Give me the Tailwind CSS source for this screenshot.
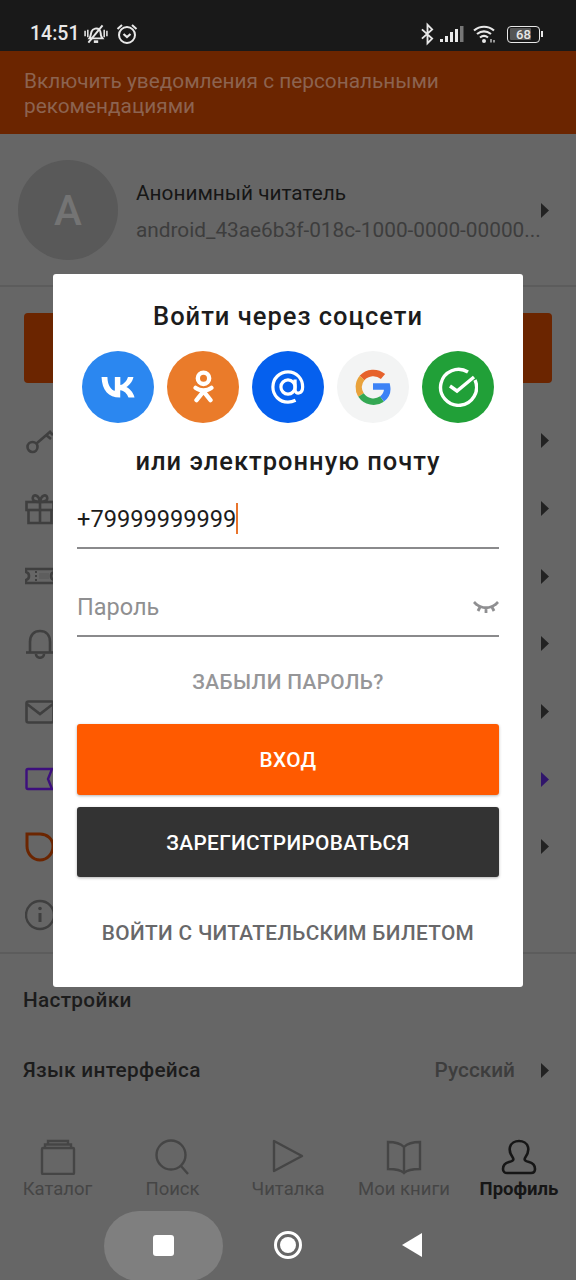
<!DOCTYPE html>
<html lang="ru">
<head>
<meta charset="UTF-8">
<title>Профиль</title>
<script src="https://cdn.jsdelivr.net/npm/@tailwindcss/browser@4"></script>
</head>
<body class="bg-[#666666]">
<div class="relative w-[576px] h-[1280px] overflow-hidden bg-[#666666] font-['Roboto',sans-serif] flex flex-col">

  <!-- status bar -->
  <div class="h-[51px] shrink-0 bg-[#191919] flex items-end justify-between pl-[30px] pr-[33px] pb-[4px] text-[#e8e8e8]">
    <div class="flex items-center gap-[5px] h-[26px]">
      <span class="text-[19.500px] leading-none font-medium">14:51</span>
      <svg width="24" height="24" viewBox="0 0 22 22" fill="none" stroke="#e8e8e8" stroke-width="1.800"><path d="M5 15c1.500-2 1-4 2-6.500 1-2.500 5-3.500 7-1.500 1.500 1.500 1.200 3 1.500 5 .2 1 .8 2 1.500 3z"/><path d="M9 18h4" stroke-width="2.400"/><path d="M4 19 17 3"/><path d="M1 8v5M3.500 7v7M18.500 7v7M21 8v5" stroke-width="1.400"/></svg>
      <svg width="22" height="24" viewBox="0 0 22 24" fill="none" stroke="#e8e8e8" stroke-width="2" class="ml-[3px]"><circle cx="11" cy="13" r="8"/><path d="M1.500 7 6 3M20.500 7 16 3"/><path d="m7.500 12 3.500 3 3.500-3" stroke-width="2.200"/></svg>
    </div>
    <div class="flex items-center h-[26px]">
      <svg width="13" height="24" viewBox="0 0 14 24" fill="none" stroke="#e8e8e8" stroke-width="2" class="mr-[5px]"><path d="M1 7l11 10-5 5V2l5 5L1 17"/></svg>
      <svg width="26" height="18" viewBox="0 0 24 18" fill="#e8e8e8" class="mr-[8px]"><rect x="0" y="14" width="3" height="3"/><rect x="5" y="11" width="3" height="6"/><rect x="10" y="7" width="3" height="10"/><rect x="15" y="4" width="3" height="13"/><rect x="20" y="1" width="3.500" height="16" fill="#777"/></svg>
      <svg width="24" height="20" viewBox="0 0 24 20" fill="none" stroke="#e8e8e8" stroke-width="2.200" class="mr-[10px]"><path d="M1 6.500c6-5 14-5 20 0M4 10c4.500-3.500 9.500-3.500 14 0M7 13.500c2.500-2 5.500-2 8 0"/><circle cx="11" cy="17" r="2" fill="#e8e8e8" stroke="none"/><path d="M18 15v3.500M21 16v2.500" stroke-width="1.200"/></svg>
      <div class="relative w-[33px] h-[17px] border border-[#e8e8e8] rounded-[4px] flex items-center p-[1.500px]">
        <div class="h-full w-[21px] bg-[#555] rounded-[1px]"></div>
        <span class="absolute inset-0 text-center text-[13px] leading-[15px] font-medium text-[#e8e8e8]">68</span>
      </div>
      <div class="w-[2px] h-[6px] bg-[#e8e8e8] ml-[1px]"></div>
    </div>
  </div>

  <!-- notifications banner -->
  <div class="h-[83px] shrink-0 bg-[#6b2500] px-[24px] pt-[18px] text-[20.800px] leading-[24.500px] text-[#8c6350]">
    Включить уведомления с персональными<br>рекомендациями
  </div>

  <!-- profile header -->
  <div class="h-[153px] shrink-0 border-b-2 border-[#5c5c5c] pl-[18px] pr-[28px] pt-[26px] flex items-start">
    <div class="w-[100px] h-[100px] rounded-full bg-[#595959] flex items-center justify-center text-[42px] font-medium text-[#747474] shrink-0">A</div>
    <div class="ml-[18px] w-[404px] pt-[21px]">
      <div class="text-[20.800px] leading-[24px] text-[#161616]">Анонимный читатель</div>
      <div class="mt-[13px] text-[20.800px] leading-[24px] text-[#3d3d3d] whitespace-nowrap">android_43ae6b3f-018c-1000-0000-00000...</div>
    </div>
    <svg width="9" height="15" viewBox="0 0 9 15" class="mt-[43px] shrink-0"><path d="M1 0l8 7.500-8 7.500z" fill="#222"/></svg>
  </div>

  <!-- background button -->
  <div class="h-[96px] shrink-0 px-[24px] pt-[26px]">
    <div class="h-[70px] bg-[#6b2500] rounded-[4px]"></div>
  </div>

  <!-- menu rows -->
  <div class="shrink-0 pl-[25px] pr-[27px] mt-[24px] flex flex-col">
    <div class="h-[67.700px] flex items-center justify-between">
      <svg width="30" height="30" viewBox="0 0 30 30" fill="none" stroke="#3f3f3f" stroke-width="2.600"><circle cx="7.500" cy="21" r="5"/><path d="M11.500 17.500 26 5M21 9l5 4M25 6l3 3"/></svg>
      <svg width="9" height="15" viewBox="0 0 9 15"><path d="M1 0l8 7.500-8 7.500z" fill="#222"/></svg>
    </div>
    <div class="h-[67.700px] flex items-center justify-between">
      <svg width="30" height="32" viewBox="0 0 30 32" fill="none" stroke="#3f3f3f" stroke-width="2.600"><rect x="1.500" y="9" width="27" height="8"/><path d="M3.500 17v13h23V17M15 9v21M15 9c-6 0-8-2-7-5s6-2 7 5c1-7 6-8 7-5s-1 5-7 5z"/></svg>
      <svg width="9" height="15" viewBox="0 0 9 15"><path d="M1 0l8 7.500-8 7.500z" fill="#222"/></svg>
    </div>
    <div class="h-[67.700px] flex items-center justify-between">
      <svg width="30" height="18" viewBox="0 0 30 18" fill="none" stroke="#3f3f3f" stroke-width="2.600"><path d="M1 2h28v3c-4 1-4 7 0 8v3H1v-3c4-1 4-7 0-8z"/><path d="M11 4v2M11 8v2M11 12v2" stroke-width="2"/><path d="M14 6h10v6H14z" fill="#5e5e5e" stroke="none"/></svg>
      <svg width="9" height="15" viewBox="0 0 9 15"><path d="M1 0l8 7.500-8 7.500z" fill="#222"/></svg>
    </div>
    <div class="h-[67.700px] flex items-center justify-between">
      <svg width="30" height="30" viewBox="0 0 30 30" fill="none" stroke="#3f3f3f" stroke-width="2.600"><path d="M5 23V13C5 6 9 2 15 2s10 4 10 11v10"/><path d="M1 23.500h28"/><path d="M11 25c0 5 8 5 8 0"/></svg>
      <svg width="9" height="15" viewBox="0 0 9 15"><path d="M1 0l8 7.500-8 7.500z" fill="#222"/></svg>
    </div>
    <div class="h-[67.700px] flex items-center justify-between">
      <svg width="30" height="24" viewBox="0 0 30 24" fill="none" stroke="#3f3f3f" stroke-width="2.600"><rect x="1.500" y="1.500" width="27" height="21" rx="2"/><path d="m2 4 13 10L28 4"/></svg>
      <svg width="9" height="15" viewBox="0 0 9 15"><path d="M1 0l8 7.500-8 7.500z" fill="#222"/></svg>
    </div>
    <div class="h-[67.700px] flex items-center justify-between">
      <svg width="30" height="24" viewBox="0 0 30 24" fill="none" stroke="#3d0f7d" stroke-width="2.400"><path d="M3 2h24l-4 10 4 10H3a1.500 1.500 0 0 1-1.500-1.500v-17A1.500 1.500 0 0 1 3 2z"/></svg>
      <svg width="9" height="15" viewBox="0 0 9 15"><path d="M1 0l8 7.500-8 7.500z" fill="#30156b"/></svg>
    </div>
    <div class="h-[67.700px] flex items-center justify-between">
      <svg width="30" height="30" viewBox="0 0 30 30" fill="none" stroke="#6b2500" stroke-width="3"><path d="M2 2h13c7 0 13 5 13 12 0 8-6 14-13 14S2 22 2 14z"/></svg>
      <svg width="9" height="15" viewBox="0 0 9 15"><path d="M1 0l8 7.500-8 7.500z" fill="#222"/></svg>
    </div>
    <div class="h-[67.700px] flex items-center justify-between">
      <svg width="32" height="32" viewBox="0 0 32 32" fill="none" stroke="#3f3f3f" stroke-width="2.400"><circle cx="15" cy="16" r="14"/><path d="M15 14v9" stroke-width="3"/><circle cx="15" cy="9.500" r="1.800" fill="#3f3f3f" stroke="none"/></svg>
    </div>
  </div>

  <!-- settings -->
  <div class="shrink-0 mt-[3px] h-[2px] bg-[#5c5c5c]"></div>
  <div class="shrink-0 pl-[23px] pt-[34px] text-[20.800px] leading-[24px] tracking-[0.3px] font-medium text-[#1c1c1c]">Настройки</div>
  <div class="shrink-0 pl-[23px] pr-[27px] mt-[47px] h-[24px] flex items-center justify-between text-[20.800px] tracking-[0.3px] font-medium text-[#1c1c1c]">
    <span>Язык интерфейса</span>
    <span class="flex items-center gap-[25px] text-[#3d3d3d] tracking-normal">Русский
      <svg width="9" height="15" viewBox="0 0 9 15"><path d="M1 0l8 7.500-8 7.500z" fill="#222"/></svg>
    </span>
  </div>

  <!-- tab bar -->
  <div class="shrink-0 mt-[56px] grid grid-cols-[115px_115px_116px_116px_114px] h-[72px]">
    <div class="flex flex-col items-center text-[#454545]">
      <svg width="36" height="36" viewBox="0 0 36 36" fill="none" stroke="#454545" stroke-width="2.400"><rect x="2" y="9" width="32" height="26" rx="1"/><path d="M5 9V5.500h26V9M8 5V2h20v3"/></svg>
      <span class="mt-[3px] text-[18.500px] leading-[22px] whitespace-nowrap">Каталог</span>
    </div>
    <div class="flex flex-col items-center text-[#454545]">
      <svg width="36" height="36" viewBox="0 0 36 36" fill="none" stroke="#454545" stroke-width="2.400"><circle cx="16" cy="16" r="14.500"/><path d="m26 27 7 8"/></svg>
      <span class="mt-[3px] text-[18.500px] leading-[22px] whitespace-nowrap">Поиск</span>
    </div>
    <div class="flex flex-col items-center text-[#454545]">
      <svg width="36" height="36" viewBox="0 0 36 36" fill="none" stroke="#454545" stroke-width="2.400" stroke-linejoin="round"><path d="M4 2v30l28-15z"/></svg>
      <span class="mt-[3px] text-[18.500px] leading-[22px] whitespace-nowrap">Читалка</span>
    </div>
    <div class="flex flex-col items-center text-[#454545]">
      <svg width="36" height="36" viewBox="0 0 36 36" fill="none" stroke="#454545" stroke-width="2.400"><path d="M18 8c-3-3-8-5-16-5v27c8 0 13 1 16 4 3-3 8-4 16-4V3C26 3 21 5 18 8zM18 8v26"/></svg>
      <span class="mt-[3px] text-[18.500px] leading-[22px] whitespace-nowrap">Мои книги</span>
    </div>
    <div class="flex flex-col items-center text-[#161616]">
      <svg width="36" height="36" viewBox="0 0 36 36" fill="none" stroke="#161616" stroke-width="2.600"><path d="M12 19c-3-4-4-7-3-11 1-4 5-6 9-6s8 2 9 6c1 4 0 7-3 11-1 2 0 3 4 4 4 1 6 3 6 7 0 3-2 4-4 4H6c-2 0-4-1-4-4 0-4 2-6 6-7 4-1 5-2 4-4z"/></svg>
      <span class="mt-[3px] text-[18.500px] leading-[22px] font-bold whitespace-nowrap">Профиль</span>
    </div>
  </div>

  <!-- android nav -->
  <div class="shrink-0 flex-1 flex items-start pl-[104px]">
    <div class="w-[119px] h-[70px] rounded-full bg-[#7f7f7f] flex items-center justify-center">
      <div class="w-[21px] h-[21px] bg-white rounded-[3px]"></div>
    </div>
    <div class="w-[28px] h-[28px] ml-[51px] mt-[20px] rounded-full border-[3px] border-white flex items-center justify-center">
      <div class="w-[16px] h-[16px] rounded-full bg-white"></div>
    </div>
    <svg width="21" height="24" viewBox="0 0 21 24" class="ml-[99px] mt-[22px]"><path d="M21 0v24L1 12z" fill="#fff"/></svg>
  </div>

  <!-- login modal -->
  <div class="absolute left-[53px] top-[274px] w-[470px] h-[713px] bg-white rounded-[3px] px-[24px] pt-[27px] flex flex-col">
    <h2 class="text-center text-[25.500px] leading-[30px] font-medium tracking-[1px] text-[#1c1c1c]">Войти через соцсети</h2>
    <div class="mt-[20px] flex justify-between px-[5px]">
      <div class="w-[72px] h-[72px] rounded-full bg-[#2b87f0] flex items-center justify-center">
        <svg width="35" height="22" viewBox="0 0 38 24"><path d="M20.500 23.500C8 23.500 1 15 .5 1h6.400c.2 10 4.600 14.300 8.100 15.200V1h6v8.700C24.500 9.300 28 5.400 29.300 1h6c-1 5.300-5 9.300-7.800 11 2.800 1.300 7.300 4.800 9 11.500h-6.600c-1.400-4.300-4.800-7.600-9-8v8z" fill="#fff"/></svg>
      </div>
      <div class="w-[72px] h-[72px] rounded-full bg-[#ea7b2a] flex items-center justify-center">
        <svg width="21" height="34" viewBox="0 0 24 38" fill="none" stroke="#fff" stroke-width="5" stroke-linecap="round"><circle cx="12" cy="9" r="6.500"/><path d="M3 20c5 4 13 4 18 0M12 24 4 34M12 24l8 10"/></svg>
      </div>
      <div class="w-[72px] h-[72px] rounded-full bg-[#0560ee] flex items-center justify-center">
        <svg width="34" height="34" viewBox="0 0 36 36" fill="none" stroke="#fff" stroke-width="3.400"><circle cx="18" cy="18" r="7.500"/><path d="M25.500 10v11c0 5 8 5 8-3C33.500 9 27 2 18 2S2 9 2 18s7 16 16 16c3 0 6-1 8-2"/></svg>
      </div>
      <div class="w-[72px] h-[72px] rounded-full bg-[#f3f4f4] flex items-center justify-center">
        <svg width="36" height="36" viewBox="0 0 36 36" fill="none" stroke-width="6.500"><path d="M28 7.500A15 15 0 0 0 7 9" stroke="#e6622d"/><path d="M7 9a15 15 0 0 0-1 17" stroke="#e9a23b"/><path d="M6 26a15 15 0 0 0 21 4" stroke="#34a853"/><path d="M27 30c4-3 6-7 5-12.500H18" stroke="#3c82f6"/></svg>
      </div>
      <div class="w-[72px] h-[72px] rounded-full bg-[#21a038] flex items-center justify-center">
        <svg width="40" height="40" viewBox="0 0 40 40" fill="none" stroke="#fff" stroke-width="3.400"><path d="M37 13a18 18 0 1 1-7-8"/><path d="m12 19 7 5L36 10"/></svg>
      </div>
    </div>
    <div class="mt-[23px] text-center text-[25.500px] leading-[30px] font-medium tracking-[1px] text-[#1c1c1c]">или электронную почту</div>

    <div class="mt-[25px] h-[48px] border-b-2 border-[#8a8a8c] flex items-start">
      <span class="text-[23.600px] leading-[36px] text-[#1c1c1c]">+79999999999</span>
      <span class="w-[2px] h-[31px] bg-[#e8742c] mt-[2px]"></span>
    </div>
    <div class="h-[88px] border-b-2 border-[#8a8a8c] flex items-end justify-between pb-[10px]">
      <span class="text-[23.500px] leading-[36px] text-[#8f8f91]">Пароль</span>
      <svg width="26" height="14" viewBox="0 0 26 14" fill="none" stroke="#8f8f91" stroke-width="2.800" class="mb-[10px]"><path d="M3 3c6 5 14 5 20 0M1 1l3 3M25 1l-3 3M7 6 5 10M13 8v4M19 6l2 4"/></svg>
    </div>
    <div class="mt-[33px] text-center text-[20.800px] leading-[24px] tracking-[0.4px] font-medium text-[#969698]">ЗАБЫЛИ ПАРОЛЬ?</div>

    <button class="mt-[30px] h-[71px] shrink-0 pt-[3px] bg-[#ff5a00] rounded-[3px] shadow-[0_1px_3px_rgba(0,0,0,0.3)] text-white text-[20.800px] tracking-[0.35px] font-medium">ВХОД</button>
    <button class="mt-[12px] h-[70px] shrink-0 pt-[3px] bg-[#333333] rounded-[3px] shadow-[0_1px_3px_rgba(0,0,0,0.3)] text-white text-[20.800px] tracking-[0.35px] font-medium">ЗАРЕГИСТРИРОВАТЬСЯ</button>
    <div class="mt-[44px] text-center text-[20.800px] leading-[24px] tracking-[0.33px] font-medium text-[#68686a]">ВОЙТИ С ЧИТАТЕЛЬСКИМ БИЛЕТОМ</div>
  </div>
</div>
</body>
</html>
